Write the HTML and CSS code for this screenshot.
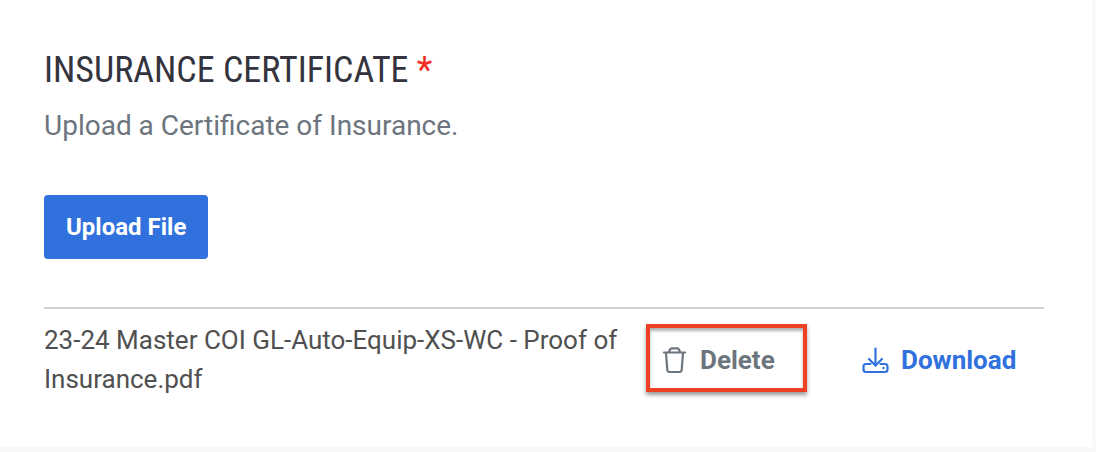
FILE: index.html
```html
<!DOCTYPE html>
<html lang="en">
<head>
  <meta charset="UTF-8" />
  <meta name="viewport" content="width=device-width, initial-scale=1.0"/>
  <title>Insurance Certificate</title>
  <link rel="stylesheet" href="styles.css">
</head>
<body>

<main class="card">
  <h1>INSURANCE CERTIFICATE <span class="required">*</span></h1>
  <p class="description">Upload a Certificate of Insurance.</p>

  <button type="button" class="upload-btn">Upload File</button>

  <div class="file-row">
    <div class="file-name">23-24 Master COI GL-Auto-Equip-XS-WC - Proof of Insurance.pdf</div>

    <button type="button" class="delete-btn">
      <svg class="icon" viewBox="0 0 28 28" fill="none" stroke="currentColor" stroke-width="2.2" stroke-linecap="round" stroke-linejoin="round" aria-hidden="true">
        <path d="M4 6.500H25"/>
        <path d="M9 6L10 3.500Q10.600 2.300 12 2.300H17Q18.400 2.300 19 3.500L20 6"/>
        <path d="M6 7L7.300 24Q7.500 26 9.500 26H19.500Q21.500 26 21.700 24L23 7"/>
      </svg>
      Delete
    </button>

    <a href="#" class="download-link">
      <svg class="icon" viewBox="0 0 28 28" fill="none" stroke="currentColor" stroke-width="2.200" stroke-linecap="round" stroke-linejoin="round" aria-hidden="true">
        <path d="M14.500 2.500V19.500"/>
        <path d="M8 13L14.500 19.500L21 13"/>
        <path d="M9.500 18H5Q2.500 18 2.500 20.500V23.500Q2.500 26 5 26H24Q26.500 26 26.500 23.500V20.500Q26.500 18 24 18H19.500"/>
        <circle cx="22.500" cy="22" r="1.200" fill="currentColor" stroke="none"/>
      </svg>
      Download
    </a>
  </div>
</main>

</body>
</html>
```

FILE: styles.css
```css
* {
  box-sizing: border-box;
}

body {
  font-family: Roboto, Arial, sans-serif;
  margin: 0;
  min-height: 100vh;
  display: flex;
  background: #f8f8f8;
}

.card {
  flex: 1;
  margin: 0 4px 5px 0;
  padding: 44px 48px 44px 44px;
  background: #fff;
}

h1 {
  margin: 0;
  font-family: "Roboto Condensed", Roboto, sans-serif;
  font-size: 36px;
  font-weight: 400;
  line-height: 52px;
  color: #33343e;
}

.required {
  color: #f03022;
}

.description {
  margin: 8px 0 48px;
  font-size: 28px;
  line-height: 43px;
  color: #6c757d;
}

.upload-btn {
  display: block;
  height: 64px;
  padding: 0 22px;
  border: none;
  border-radius: 4px;
  background: #3071dd;
  color: #fff;
  font-family: inherit;
  font-size: 24px;
  font-weight: 700;
  cursor: pointer;
}

.file-row {
  display: grid;
  grid-template-columns: 1fr 161px 211px;
  column-gap: 26px;
  align-items: center;
  margin-top: 48px;
  padding-top: 12px;
  border-top: 2px solid #cfcfcf;
}

.file-name {
  font-size: 26px;
  line-height: 39px;
  color: #505050;
}

.delete-btn,
.download-link {
  display: flex;
  align-items: center;
  gap: 12px;
  font-family: inherit;
  font-size: 26px;
  font-weight: 700;
  cursor: pointer;
}

.delete-btn {
  height: 68px;
  margin-bottom: 4px;
  padding: 4px 10px 0;
  border: 4px solid #ee4023;
  background: #fff;
  color: #6c757d;
  box-shadow: 0 3px 4px rgba(0,0,0,0.4), inset 0 3px 3px rgba(0,0,0,0.3);
}

.download-link {
  padding-left: 28px;
  color: #3071dd;
  text-decoration: none;
}

.icon {
  flex: none;
  width: 28px;
  height: 28px;
}
```
